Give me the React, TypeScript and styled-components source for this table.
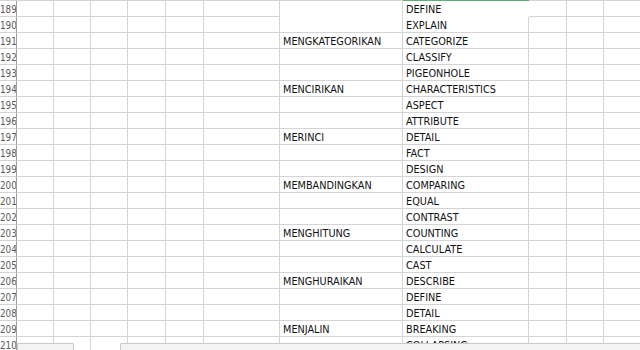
import React from "react";
import styled, { createGlobalStyle } from "styled-components";

const Global = createGlobalStyle`
  html, body { margin: 0; padding: 0; background: #ffffff; }
  body { width: 640px; height: 350px; overflow: hidden; }
`;

const COLS = "17px 37px 37px 37px 38px 38px 76px 123px 126px 38px 37px 37px";

const Page = styled.div`
  position: relative;
  width: 640px;
  height: 350px;
  overflow: hidden;
  background: #ffffff;
`;

const Sheet = styled.div`
  display: flex;
  flex-direction: column;
  width: 641px;
`;

const Row = styled.div`
  display: grid;
  grid-template-columns: ${COLS};
  height: 16px;
`;

const TopEdge = styled.div`
  display: grid;
  grid-template-columns: ${COLS};
  height: 1px;
`;

const EdgeSeg = styled.div<{ $sel?: boolean }>`
  background: ${(p) => (p.$sel ? "#72a47c" : "#d4d4d4")};
`;

const RowHead = styled.div`
  box-sizing: border-box;
  height: 16px;
  border-right: 1px solid #9e9e9e;
  border-bottom: 1px solid #d4d4d4;
  font-family: "Liberation Sans Narrow", "DejaVu Sans Condensed", "Liberation Sans", sans-serif;
  font-size: 9.8px;
  line-height: 17px;
  color: #5a5a5a;
  text-align: center;
  overflow: hidden;
`;

const Cell = styled.div<{ $noBottom?: boolean; $noRight?: boolean }>`
  box-sizing: border-box;
  height: 16px;
  border-right: 1px solid ${(p) => (p.$noRight ? "transparent" : "#d4d4d4")};
  border-bottom: 1px solid ${(p) => (p.$noBottom ? "transparent" : "#d4d4d4")};
  padding-left: 3px;
  font-family: "Liberation Sans Narrow", "DejaVu Sans Condensed", "Liberation Sans", sans-serif;
  font-size: 10.8px;
  line-height: 17px;
  color: #111111;
  white-space: nowrap;
  overflow: hidden;
`;

const BottomTab = styled.div<{ $left: number; $width: number }>`
  position: absolute;
  top: 343px;
  left: ${(p) => p.$left}px;
  width: ${(p) => p.$width}px;
  height: 12px;
  box-sizing: border-box;
  background: #f3f3f3;
  border: 1px solid #c9c9c9;
  border-radius: 1px;
`;

type RowData = { n: number; g?: string; h?: string };

const rows: RowData[] = [
  { n: 189, h: "DEFINE" },
  { n: 190, h: "EXPLAIN" },
  { n: 191, g: "MENGKATEGORIKAN", h: "CATEGORIZE" },
  { n: 192, h: "CLASSIFY" },
  { n: 193, h: "PIGEONHOLE" },
  { n: 194, g: "MENCIRIKAN", h: "CHARACTERISTICS" },
  { n: 195, h: "ASPECT" },
  { n: 196, h: "ATTRIBUTE" },
  { n: 197, g: "MERINCI", h: "DETAIL" },
  { n: 198, h: "FACT" },
  { n: 199, h: "DESIGN" },
  { n: 200, g: "MEMBANDINGKAN", h: "COMPARING" },
  { n: 201, h: "EQUAL" },
  { n: 202, h: "CONTRAST" },
  { n: 203, g: "MENGHITUNG", h: "COUNTING" },
  { n: 204, h: "CALCULATE" },
  { n: 205, h: "CAST" },
  { n: 206, g: "MENGHURAIKAN", h: "DESCRIBE" },
  { n: 207, h: "DEFINE" },
  { n: 208, h: "DETAIL" },
  { n: 209, g: "MENJALIN", h: "BREAKING" },
  { n: 210, h: "COLLAPSING" },
];

export default function App() {
  return (
    <Page>
      <Global />
      <Sheet>
        <TopEdge>
          {Array.from({ length: 12 }).map((_, i) => (
            <EdgeSeg key={i} $sel={i === 8} />
          ))}
        </TopEdge>
        {rows.map((r, idx) => {
          const first = idx === 0;
          return (
            <Row key={r.n}>
              <RowHead>{r.n}</RowHead>
              <Cell />
              <Cell />
              <Cell />
              <Cell />
              <Cell />
              <Cell />
              <Cell $noBottom={first}>{r.g ?? ""}</Cell>
              <Cell $noBottom={first} $noRight={first}>
                {r.h ?? ""}
              </Cell>
              <Cell />
              <Cell />
              <Cell />
            </Row>
          );
        })}
      </Sheet>
      <BottomTab $left={17} $width={57} />
      <BottomTab $left={120} $width={530} />
    </Page>
  );
}
